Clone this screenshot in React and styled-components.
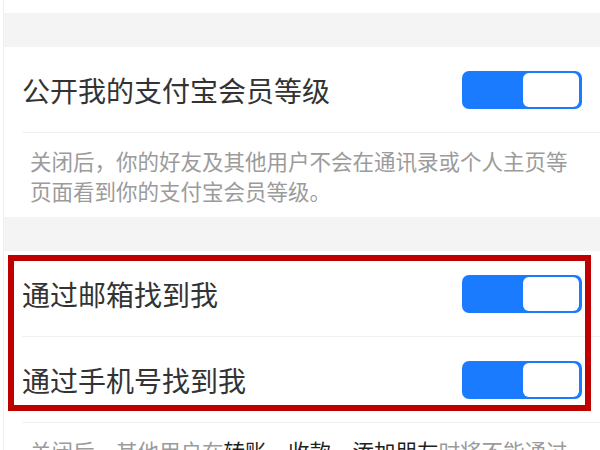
import React from "react"
import styled, { createGlobalStyle } from "styled-components"

const GlobalStyle = createGlobalStyle`
    html, body {
        margin: 0;
        padding: 0;
        background: #ffffff;
    }
    body {
        font-family: "Noto Sans CJK SC", "Noto Sans", sans-serif;
        overflow: hidden;
    }
`

const Page = styled.div`
    width: 596px;
    height: 450px;
    margin-left: 3px;
    border-left: 1px solid #efefef;
    overflow: hidden;
    background: #ffffff;
`
const TopBlank = styled.div`
    height: 13px;
`
const Band = styled.div`
    height: 34px;
    background-color: #f4f4f4;
`
const Row = styled.div`
    height: 85px;
    margin-left: 18px;
    padding-right: 18px;
    display: flex;
    align-items: center;
    justify-content: space-between;
    border-bottom: 1px solid #f1f1f1;
`
const Title = styled.span`
    font-size: 28px;
    line-height: 34px;
    color: #333333;
    letter-spacing: 0;
`
const Track = styled.div`
    width: 120px;
    height: 38px;
    box-sizing: border-box;
    padding: 2px 3px 2px 2px;
    border-radius: 7px;
    background-color: #1a7bff;
    display: flex;
    justify-content: flex-end;
`
const Knob = styled.div`
    width: 56px;
    height: 34px;
    border-radius: 6px;
    background-color: #ffffff;
`
const Desc = styled.p`
    margin: 0;
    padding: 13px 14px 11px 26px;
    font-size: 21.5px;
    line-height: 30px;
    color: #9b9b9b;
    height: ${ p => p.$open ? "auto" : "60px" };
`
const Strong = styled.span`
    color: #1f1f1f;
`
const Group = styled.div`
    position: relative;
`
const Highlight = styled.div`
    position: absolute;
    left: 4px;
    top: 4px;
    width: 583px;
    height: 156px;
    box-sizing: border-box;
    border: 6px solid #bf0000;
    pointer-events: none;
`

const Switch = () => (
    <Track>
        <Knob />
    </Track>
)

const App = () => {
    return (
        <Page>
            <GlobalStyle />
            <TopBlank />
            <Band />
            <Row>
                <Title>公开我的支付宝会员等级</Title>
                <Switch />
            </Row>
            <Desc>关闭后，你的好友及其他用户不会在通讯录或个人主页等页面看到你的支付宝会员等级。</Desc>
            <Band />
            <Group>
                <Row>
                    <Title>通过邮箱找到我</Title>
                    <Switch />
                </Row>
                <Row>
                    <Title>通过手机号找到我</Title>
                    <Switch />
                </Row>
                <Highlight />
            </Group>
            <Desc $open>关闭后，其他用户在<Strong>转账</Strong>、<Strong>收款</Strong>、<Strong>添加朋友</Strong>时将不能通过邮箱或手机号找到你。</Desc>
        </Page>
    )
}

export default App
